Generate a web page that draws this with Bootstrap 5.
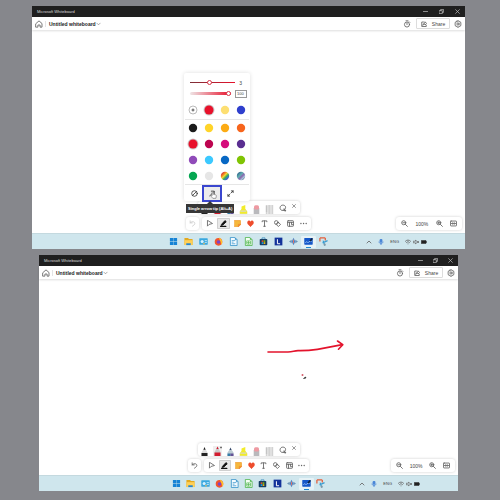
<!DOCTYPE html>
<html lang="en">
<head>
<meta charset="utf-8">
<meta name="viewport" content="width=device-width, initial-scale=1">
<title>Microsoft Whiteboard</title>
<link href="https://cdn.jsdelivr.net/npm/bootstrap@5.3.0/dist/css/bootstrap.min.css" rel="stylesheet">
<style>
body{background:#86878c;font-family:"Liberation Sans",Arial,sans-serif;font-size:5px;line-height:6px;color:#444}
.desk{min-height:100vh;padding:6px 35px 9px 32px;gap:6px}
.win{--tools:109px;--task:164px;--zoom:66px;--cap:16px;flex:243 1 0;background:#fff}
.win-b{--tools:105px;--task:159px;--zoom:64px;--cap:15px;flex:236 1 0;margin:0 7px}
svg{display:block;overflow:visible}
.ic{width:8px;height:8px;fill:none;stroke:#666;stroke-width:1.3;stroke-linecap:round;stroke-linejoin:round}
.win button,.win a{border:0;padding:0;background:none;color:inherit;display:flex;align-items:center;justify-content:center;text-decoration:none}
.titlebar{background:#1f1f1f;color:#ddd;height:11px;font-size:4px;padding-left:5px}
.titlebar button{width:var(--cap)}
.titlebar .ic{width:5px;height:5px;stroke:#bbb;stroke-width:1.7}
.head{height:13px;padding:0 3px;box-shadow:0 1px 2px #0002;z-index:1}
.head h1{font-size:5px;line-height:6px;font-weight:700;margin:0;color:#222}
.head .more .ic{width:5px}
.rule{width:1px;height:6px;background:#e4e4e4;margin:0 3px 0 2px}
.win .share{width:34px;height:11px;border:1px solid #ddd;border-radius:1px;gap:5px;margin:0 4px 0 5px}
.share .ic{width:6px;height:6px;stroke-width:1.7}
.board{padding:3px}
.panel-x{background:#fff;border-radius:3px;box-shadow:0 0 3px #0003}
.bottom-row{display:grid;grid-template-columns:1fr auto 1fr;align-items:end}
.dock{gap:3px}
.win .undo{width:13px;height:13px}
.tools{width:var(--tools);height:13px;padding:1px}
.tools button{flex:1 1 0;min-width:0}
.win .tools .on{background:#e8e8e8;box-shadow:inset 0 0 0 1px #d0d0d0;border-radius:1px;margin:0 1px}
.tools .ic{width:7px;height:7px;stroke-width:1.5}
.undo .ic{width:7px;height:7px;stroke-width:1.5}
.undo:disabled .ic{stroke:#ccc}
.zoomer{width:var(--zoom);height:13px;padding:0 5px;justify-self:end}
.zoomer .ic{width:7px;height:7px;stroke-width:1.5}
.pens{width:102px;height:13px;padding-right:1px;margin-bottom:3px}
.pens button{flex:13 1 0;align-items:end}
.win .pens .lasso{align-items:center}
.win .pens .shut{flex:9 1 0;align-items:start;padding-top:3px}
.pens .pen{width:9px;height:10px}
.pens .lasso .ic{stroke-width:1.4}
.pens .shut .ic{width:4px;height:4px;stroke-width:2}
.taskbar{height:16px;background:#cfe6ed;border-top:1px solid #c4d9df;display:grid;grid-template-columns:1fr auto 1fr;align-items:center;color:#444;font-size:4px}
.apps{width:var(--task)}
.apps a{flex:1 1 0;height:12px}
.apps .ap{width:9px;height:9px}
.apps .cur{background:#e6f2f6;border-radius:1px}
.apps .cur::after{content:"";position:absolute;bottom:0;width:5px;height:1px;background:#1f86d2}
.tray{justify-self:end;margin-right:38px;gap:2px}
.tray .ic{width:6px;height:6px;stroke-width:1.7}
/* colour menu */
.colors{position:absolute;left:-2px;bottom:29px;width:66px;padding:4px 1px 0;border-radius:2px;box-shadow:0 0 4px #0002;z-index:3}
.sl-row{height:11px;padding:0 2px 0 5px}
.sl-row input{appearance:none;height:6px;background:none;min-width:0;margin:0}
.sl-row .thick-in{width:45px}
.sl-row .alpha-in{width:41px}
.sl-row input::-webkit-slider-runnable-track{height:1px;background:linear-gradient(90deg,#7b3038,#e8112b)}
.sl-row .alpha-in::-webkit-slider-runnable-track{height:3px;border-radius:2px;background:linear-gradient(90deg,#eee5e6,#e8112b)}
.sl-row input::-webkit-slider-thumb{appearance:none;width:5px;height:5px;border:1px solid #d63346;background:#fff;border-radius:50%;margin-top:-2px}
.sl-row .alpha-in::-webkit-slider-thumb{margin-top:-1px}
.sl-row output{font-size:5px;line-height:6px;padding:0 5px 0 0}
.sl-row .boxed{border:1px solid #999;padding:0 1px;height:8px;width:12px;font-size:4px}
.sw-grid{display:grid;grid-template-columns:repeat(4,1fr);grid-auto-rows:16px;border-top:1px solid #e6e6e6}
.sw-grid.first-row{border:0;padding:4px 0 3px;grid-auto-rows:13px}
.sw-grid svg{width:12px;height:12px}
.tips{height:17px;border-top:1px solid #e6e6e6;padding-left:1px}
.tips button{width:16px;height:14px}
.tips .ic{width:7px;height:7px;stroke-width:1.4;stroke:#333}
.win .tips .picked{width:20px;height:17px;border:2px solid #3a46cf;background:#ececec}
.hand{position:absolute;left:26px;bottom:2px;width:7px;height:8px}
.tipbox{position:absolute;left:0;bottom:17px;z-index:4;background:#363636;color:#fff;font-size:4px;line-height:5px;font-weight:700;padding:2px;white-space:nowrap}
.tipbox::before{content:"";position:absolute;left:50%;top:-3px;margin-left:-3px;border:3px solid transparent;border-top:0;border-bottom-color:#363636}
.ink{position:absolute;left:54%;top:30%;width:84px;height:46px}
</style>
<script src="https://cdn.jsdelivr.net/npm/bootstrap@5.3.0/dist/js/bootstrap.bundle.min.js"></script>
</head>
<body>
<svg width="0" height="0" class="position-absolute" aria-hidden="true">
<defs>
<linearGradient id="rain" x1="0" y1="0" x2="1" y2="1"><stop offset=".15" stop-color="#d63636"/><stop offset=".33" stop-color="#f08a24"/><stop offset=".45" stop-color="#f4d838"/><stop offset=".6" stop-color="#42ad55"/><stop offset=".75" stop-color="#2c78c8"/><stop offset=".9" stop-color="#8b3ea8"/></linearGradient>
<linearGradient id="galaxy" x1="0" y1="0" x2="1" y2="1"><stop offset=".15" stop-color="#326a90"/><stop offset=".4" stop-color="#62b0b0"/><stop offset=".58" stop-color="#8a64b0"/><stop offset=".75" stop-color="#a9cbd8"/><stop offset=".9" stop-color="#4a3a80"/></linearGradient>
</defs>
<symbol id="home" viewBox="0 0 12 12"><path d="M1.5 5.3 6 1.3l4.500 4v5.400H7.600V7.500H4.400v3.200H1.500z"/></symbol>
<symbol id="chev" viewBox="0 0 12 12"><path d="M2 4l4 4 4-4"/></symbol>
<symbol id="up" viewBox="0 0 12 12"><path d="M2 8l4-4 4 4"/></symbol>
<symbol id="min" viewBox="0 0 12 12"><path d="M1 6h10"/></symbol>
<symbol id="rest" viewBox="0 0 12 12"><path d="M1 4h7v7H1zM4 4V1h7v7H8"/></symbol>
<symbol id="x" viewBox="0 0 12 12"><path d="M1.500 1.500l9 9m0-9l-9 9"/></symbol>
<symbol id="timer" viewBox="0 0 12 12"><circle cx="6" cy="6.800" r="3.800"/><path d="M4.500 1.200h3M6 4.600v2.200M9.400 2.700l.8.8"/></symbol>
<symbol id="shr" viewBox="0 0 12 12"><path d="M5 2H1.500v9h9V8.500M4 8c.3-3 2-4 4-4V1.500L11.300 5 8 8V6C6 6 5 6.700 4 8z"/></symbol>
<symbol id="gear" viewBox="0 0 12 12"><path d="M4.700 1.300h2.600l.5 1.400 1.500-.2 1.300 2.200-.9 1.300.9 1.300-1.300 2.200-1.500-.2-.5 1.400H4.700l-.5-1.400-1.500.2-1.300-2.200.9-1.300-.9-1.300 1.300-2.200 1.500.2z"/><circle cx="6" cy="6" r="1.700"/></symbol>
<symbol id="undo" viewBox="0 0 12 12"><path d="M2 1.500V5h3.500M2 5c2-3 8-3 8 1 0 2-2 3-4 4.500"/></symbol>
<symbol id="sel" viewBox="0 0 12 12"><path d="M2.500 1.200v9.300l2.700-2.900 5.300-1.400z"/></symbol>
<symbol id="inkpen" viewBox="0 0 12 12"><path d="M3 7l5.500-6 2.200 2L5 8.500l-2.500.7z" fill="#111" stroke="#111"/><path d="M1 11h9" stroke="#111" stroke-width="2"/></symbol>
<symbol id="note" viewBox="0 0 12 12"><path d="M1 1h10v6.500L7.500 11H1z" fill="#f6b83c" stroke="#f2a43a"/><path d="M11 7.500H7.500V11z" fill="#ef8b32" stroke="#ef8b32"/></symbol>
<symbol id="heart" viewBox="0 0 12 12"><path d="M6 11C2.500 8.500.8 6.500.8 4.200.8 1.300 4.500.4 6 2.800 7.500.4 11.200 1.300 11.200 4.200 11.200 6.500 9.500 8.500 6 11z" fill="#ee4d2d" stroke="#ee4d2d" stroke-width=".8"/></symbol>
<symbol id="txt" viewBox="0 0 12 12"><path d="M2 3V1.500h8V3M6 1.500v9.300M4.600 10.800h2.800"/></symbol>
<symbol id="shape" viewBox="0 0 12 12"><circle cx="4" cy="4.300" r="3.200"/><path d="M7.500 4l3.700 3.500-3.700 3.700L4 7.700z"/></symbol>
<symbol id="tmpl" viewBox="0 0 12 12"><rect x="1" y="1.200" width="10" height="9.600" rx="1"/><path d="M1 4h10M4.300 4v6.800M7.700 4v4H11"/></symbol>
<symbol id="dots" viewBox="0 0 12 12"><path d="M1.500 6h.2M6 6h.2M10.500 6h.2" stroke-width="2.200"/></symbol>
<symbol id="zout" viewBox="0 0 12 12"><circle cx="4.700" cy="4.700" r="3.500"/><path d="M7.500 7.500 11 11M3.200 4.700h3"/></symbol>
<symbol id="zin" viewBox="0 0 12 12"><circle cx="4.700" cy="4.700" r="3.500"/><path d="M7.500 7.500 11 11M3.200 4.700h3M4.700 3.200v3"/></symbol>
<symbol id="fit" viewBox="0 0 12 12"><rect x=".8" y="1.800" width="10.400" height="8.400" rx="1"/><path d="M4.300 4.600 2.900 6l1.400 1.400M7.700 4.600 9.100 6 7.700 7.400M3 6h6"/></symbol>
<symbol id="lasso" viewBox="0 0 12 12"><path d="M8 9.500H4.500C.5 9 .5 2 5.500 1.700c5-.2 5.500 4.500 3 6.500M8 7.500l2.500 3-2.500-.5z"/></symbol>
<symbol id="none" viewBox="0 0 12 12"><circle cx="6" cy="6" r="4.800"/><path d="M2.600 9.400l6.800-6.800"/></symbol>
<symbol id="one" viewBox="0 0 12 12"><path d="M1 10.500l7.500-8M4 2h5v5"/></symbol>
<symbol id="two" viewBox="0 0 12 12"><path d="M1.500 10.500l3.500-3.500M7 5l3.500-3.500M7.500 1.500h3v3M1.500 7.500v3h3"/></symbol>
<symbol id="mic" viewBox="0 0 12 12"><rect x="4" y="0" width="4" height="7" rx="2" fill="#4a86d8" stroke="#4a86d8"/><path d="M2 6c.5 4.500 7.500 4.500 8 0M6 9.500V12" stroke="#4a86d8"/></symbol>
<symbol id="wifi" viewBox="0 0 12 12"><path d="M.8 4.500c3-3.300 7.400-3.300 10.400 0M3 7c2-2 4-2 6 0M6 9.700h.1"/></symbol>
<symbol id="spk" viewBox="0 0 12 12"><path d="M1 4.500h2L6 2v8L3 7.500H1zM8.500 4.500l3 3m0-3l-3 3" stroke-width="1.500"/></symbol>
<symbol id="bat" viewBox="0 0 12 12"><path d="M1 3.500h9v5H1z" fill="#222" stroke="#222"/><path d="M11.800 5.300v1.400" stroke="#222"/></symbol>
<symbol id="p1" viewBox="0 0 9 10"><path d="M1.500 10V6.500L3.300 3.500 4.500 1 5.700 3.500l1.800 3V10z" fill="#ddd"/><path d="M3.400 3.800 4.500 1 5.600 3.800zM1.500 7h6v3h-6z" fill="#222"/></symbol>
<symbol id="p2" viewBox="0 0 9 10"><path d="M0 0h9v10H0z" fill="#f0eeee"/><path d="M1.500 10V6l1.800-3L4.500.5 5.700 3l1.800 3v4z" fill="#c9c9c9"/><path d="M3.400 3 4.500.5 5.700 3zM1.500 6.500h6V10h-6z" fill="#d31c30"/><path d="M7 1.500h2M8 .5v2" stroke="#555" stroke-width=".7"/></symbol>
<symbol id="p3" viewBox="0 0 9 10"><path d="M1.500 10V6.500L3.300 4 4.500 1.500 5.700 4l1.800 2.500V10z" fill="#bccbd3"/><path d="M3.500 4 4.500 1.600 5.500 4z" fill="#346"/><path d="M1.500 7.500h3V10h-3z" fill="#367da8"/><path d="M4.500 7.500h3V10h-3z" fill="#655295"/></symbol>
<symbol id="p4" viewBox="0 0 9 10"><path d="M.8 10V7.500L2.500 5h4l1.700 2.500V10z" fill="#ddd"/><path d="M2.500 5V2.500L6.300 1v4l1.900 2.500v2.200H.8V7.500z" fill="#f2ec2a"/><path d="M1.800 6.500h5.500v1.200H1z" fill="#d9d9c8"/></symbol>
<symbol id="p5" viewBox="0 0 9 10"><path d="M1.700 4h5.600v6H1.700z" fill="#b9b9bc"/><rect x="2" y="1.200" width="5" height="4.300" rx="1.500" fill="#ee9aa2"/></symbol>
<symbol id="p6" viewBox="0 0 9 10"><path d="M.8 1h7.400v9H.8z" fill="#d2d2d2"/><path d="M2.800 1v9M6 1v9" stroke="#eee"/><path d="M.8 3h1.500M.8 5h1.500M.8 7h1.500" stroke="#999" stroke-width=".5"/></symbol>
<symbol id="a1" viewBox="0 0 10 10"><path d="M1 1h3.800v3.800H1zM5.200 1H9v3.800H5.200zM1 5.200h3.800V9H1zM5.200 5.200H9V9H5.200z" fill="#1683d5"/></symbol>
<symbol id="a2" viewBox="0 0 10 10"><path d="M.5 1h4l1 1.200h4V9h-9z" fill="#e4a91e"/><path d="M.5 3.500h9V9h-9z" fill="#ffd057"/><path d="M2.500 7h5v2h-5z" fill="#2586d4"/></symbol>
<symbol id="a3" viewBox="0 0 10 10"><rect x=".3" y="1.500" width="9.400" height="7" rx=".5" fill="#39a8df"/><circle cx="3.500" cy="5" r="1.700" fill="#d8f2ff"/><path d="M6.300 4h2.500M6.300 6h2.500" stroke="#e9f8ff" stroke-width=".8"/><path d="M4.500 7h2v1h-2z" fill="#f7b94a"/></symbol>
<symbol id="a4" viewBox="0 0 10 10"><circle cx="5" cy="5.400" r="4.200" fill="#f2552c"/><path d="M5.500.5C9 2 10.500 6 8 8.500 8 5 6 4 5.500.5z" fill="#ffc22d"/><circle cx="5" cy="5.500" r="2" fill="#7b45c8"/></symbol>
<symbol id="a5" viewBox="0 0 10 10"><path d="M1.500.5h5l2.500 2.500v6.500H1.500z" fill="#f4fbff" stroke="#3591c8" stroke-width=".9"/><path d="M3 4h4M3 5.700h2M3 7.500h4" stroke="#3591c8" stroke-width=".8"/><path d="M6.500.5V3H9z" fill="#3591c8"/></symbol>
<symbol id="a6" viewBox="0 0 10 10"><path d="M1.500.5h5l2.500 2.500v6.500H1.500z" fill="#f4fff4" stroke="#4bb34a" stroke-width=".9"/><path d="M3 4.300h4.200V8H3zM3 6.200h4.200M5 4.300V8" fill="none" stroke="#4bb34a" stroke-width=".7"/><path d="M6.500.5V3H9z" fill="#4bb34a"/></symbol>
<symbol id="a7" viewBox="0 0 10 10"><path d="M3.300 2.500V1h3.400v1.500" fill="none" stroke="#2b82b8" stroke-width=".8"/><rect x=".8" y="2.200" width="8.400" height="7" rx=".8" fill="#173d62"/><path d="M3 3.700h1.800v1.800H3z" fill="#e9502b"/><path d="M5.200 3.700H7v1.800H5.200z" fill="#7fba00"/><path d="M3 5.900h1.800v1.800H3z" fill="#18a4ed"/><path d="M5.200 5.900H7v1.800H5.200z" fill="#ffba08"/></symbol>
<symbol id="a8" viewBox="0 0 10 10"><path d="M.7.700h8.600v8.600H.7z" fill="#12329a"/><path d="M3.800 2.500v5h3" fill="none" stroke="#fff" stroke-width="1.100"/></symbol>
<symbol id="a9" viewBox="0 0 10 10"><path d="M0 5l3-2v4zM10 5L7 3v4z" fill="#6b93b8"/><path d="M5 .8 7 5 5 9.200 3 5z" fill="#4a83c6"/><path d="M5 3v4" stroke="#eb7562"/></symbol>
<symbol id="a10" viewBox="0 0 10 10"><rect x=".3" y="1" width="9.400" height="7.500" rx=".7" fill="#1557c9"/><path d="M1.500 6.500c2-3 2 1 4-1s2 0 3-.5" fill="none" stroke="#bfe0ff" stroke-width=".8"/><path d="M6 4l2.500-3L10 2 7.500 5z" fill="#12243c"/></symbol>
<symbol id="a11" viewBox="0 0 10 10"><path d="M1 1h6M1 1v4M7 1v3" stroke="#e45f3b" stroke-width="1.400" fill="none"/><path d="M4.500 4l2 5.500M9.500 4 4 6.500" stroke="#3c9dd0" stroke-width="1.300"/><circle cx="6.300" cy="8.500" r="1.200" fill="#8197a3"/></symbol>
</svg>

<main class="desk d-flex flex-column">
<section class="win d-flex flex-column" aria-label="Whiteboard with colour menu">
  <div class="titlebar d-flex align-items-center"><span class="me-auto">Microsoft Whiteboard</span>
    <button aria-label="Minimize"><svg class="ic"><use href="#min"/></svg></button><button aria-label="Restore"><svg class="ic"><use href="#rest"/></svg></button><button aria-label="Close"><svg class="ic"><use href="#x"/></svg></button></div>
  <header class="head d-flex align-items-center position-relative">
    <button aria-label="Home"><svg class="ic"><use href="#home"/></svg></button><span class="rule"></span><h1>Untitled whiteboard</h1>
    <button class="more me-auto" aria-label="Board menu"><svg class="ic"><use href="#chev"/></svg></button>
    <button aria-label="Timer"><svg class="ic"><use href="#timer"/></svg></button>
    <button class="share"><svg class="ic"><use href="#shr"/></svg>Share</button>
    <button aria-label="Settings"><svg class="ic"><use href="#gear"/></svg></button>
  </header>
  <div class="board flex-grow-1 position-relative d-flex flex-column justify-content-end">
    <div class="pens panel-x d-flex align-self-center">
      <button aria-label="Black pen"><svg class="pen"><use href="#p1"/></svg></button><button aria-label="Red pen"><svg class="pen"><use href="#p2"/></svg></button><button aria-label="Galaxy pen"><svg class="pen"><use href="#p3"/></svg></button><button aria-label="Highlighter"><svg class="pen"><use href="#p4"/></svg></button><button aria-label="Eraser"><svg class="pen"><use href="#p5"/></svg></button><button aria-label="Ruler"><svg class="pen"><use href="#p6"/></svg></button><button class="lasso" aria-label="Lasso"><svg class="ic"><use href="#lasso"/></svg></button><button class="shut" aria-label="Close pens"><svg class="ic"><use href="#x"/></svg></button>
    </div>
    <div class="bottom-row"><span></span>
      <div class="dock d-flex position-relative">
        <button class="undo panel-x" disabled aria-label="Undo"><svg class="ic"><use href="#undo"/></svg></button>
        <div class="tools panel-x d-flex" role="toolbar"><button aria-label="Select"><svg class="ic"><use href="#sel"/></svg></button><button class="on" aria-label="Ink"><svg class="ic"><use href="#inkpen"/></svg></button><button aria-label="Note"><svg class="ic"><use href="#note"/></svg></button><button aria-label="Reactions"><svg class="ic"><use href="#heart"/></svg></button><button aria-label="Text"><svg class="ic"><use href="#txt"/></svg></button><button aria-label="Shapes"><svg class="ic"><use href="#shape"/></svg></button><button aria-label="Templates"><svg class="ic"><use href="#tmpl"/></svg></button><button aria-label="More"><svg class="ic"><use href="#dots"/></svg></button></div>
        <div class="colors panel-x">
          <div class="sl-row d-flex align-items-center justify-content-between"><input class="thick-in" type="range" min="0" max="7" value="3" aria-label="Thickness"><output>3</output></div>
          <div class="sl-row d-flex align-items-center justify-content-between"><input class="alpha-in" type="range" value="100" aria-label="Opacity"><output class="boxed">100</output></div>
          <div class="sw-grid first-row">
            <button aria-label="Add colour"><svg viewBox="0 0 12 12"><circle cx="6" cy="6" r="4" fill="#fff" stroke="#aaa" stroke-width=".8"/><path d="M4.500 6h3M6 4.500v3" stroke="#333" stroke-width=".8"/></svg></button>
            <button aria-label="Red, in use"><svg viewBox="0 0 12 12"><circle cx="6" cy="6" r="5.500" fill="#ccc"/><circle cx="6" cy="6" r="4.500" fill="#e8112b"/></svg></button>
            <button aria-label="Sand"><svg viewBox="0 0 12 12"><circle cx="6" cy="6" r="4.200" fill="#fddf72"/></svg></button>
            <button aria-label="Royal blue"><svg viewBox="0 0 12 12"><circle cx="6" cy="6" r="4.200" fill="#2f3fcd"/></svg></button>
          </div>
          <div class="sw-grid">
            <button aria-label="Black"><svg viewBox="0 0 12 12"><circle cx="6" cy="6" r="4.200" fill="#1b1b1b"/></svg></button>
            <button aria-label="Yellow"><svg viewBox="0 0 12 12"><circle cx="6" cy="6" r="4.200" fill="#ffd42a"/></svg></button>
            <button aria-label="Amber"><svg viewBox="0 0 12 12"><circle cx="6" cy="6" r="4.200" fill="#fcab14"/></svg></button>
            <button aria-label="Orange"><svg viewBox="0 0 12 12"><circle cx="6" cy="6" r="4.200" fill="#f7651d"/></svg></button>
            <button aria-label="Red"><svg viewBox="0 0 12 12"><circle cx="6" cy="6" r="5.500" fill="#ccc"/><circle cx="6" cy="6" r="4.500" fill="#e8112b"/></svg></button>
            <button aria-label="Crimson"><svg viewBox="0 0 12 12"><circle cx="6" cy="6" r="4.200" fill="#bd0550"/></svg></button>
            <button aria-label="Magenta"><svg viewBox="0 0 12 12"><circle cx="6" cy="6" r="4.200" fill="#d50c7c"/></svg></button>
            <button aria-label="Purple"><svg viewBox="0 0 12 12"><circle cx="6" cy="6" r="4.200" fill="#5a2e91"/></svg></button>
            <button aria-label="Lavender"><svg viewBox="0 0 12 12"><circle cx="6" cy="6" r="4.200" fill="#904bb9"/></svg></button>
            <button aria-label="Sky"><svg viewBox="0 0 12 12"><circle cx="6" cy="6" r="4.200" fill="#3cc9ff"/></svg></button>
            <button aria-label="Blue"><svg viewBox="0 0 12 12"><circle cx="6" cy="6" r="4.200" fill="#0868c4"/></svg></button>
            <button aria-label="Lime"><svg viewBox="0 0 12 12"><circle cx="6" cy="6" r="4.200" fill="#80c404"/></svg></button>
            <button aria-label="Green"><svg viewBox="0 0 12 12"><circle cx="6" cy="6" r="4.200" fill="#05a651"/></svg></button>
            <button aria-label="Grey"><svg viewBox="0 0 12 12"><circle cx="6" cy="6" r="4.200" fill="#e6e6e6"/></svg></button>
            <button aria-label="Rainbow"><svg viewBox="0 0 12 12"><circle cx="6" cy="6" r="4.200" fill="url(#rain)"/></svg></button>
            <button aria-label="Galaxy"><svg viewBox="0 0 12 12"><circle cx="6" cy="6" r="4.200" fill="url(#galaxy)"/></svg></button>
          </div>
          <div class="tips d-flex align-items-center"><button aria-label="No arrow"><svg class="ic"><use href="#none"/></svg></button><button class="picked" aria-label="Single arrow tip"><svg class="ic"><use href="#one"/></svg></button><button aria-label="Double arrow tip"><svg class="ic"><use href="#two"/></svg></button></div>
          <svg class="hand" viewBox="0 0 10 12"><path d="M3 7V1.500c0-1.300 1.700-1.300 1.700 0V5l3.600.8c1 .3 1 1 .9 2L8.500 11H4L1 7.500c0-1 1.200-1.200 2-.5z" fill="#fff" stroke="#666" stroke-width=".9"/></svg>
        </div>
        <div class="tipbox" role="tooltip">Single arrow tip (Alt+A)</div>
      </div>
      <div class="zoomer panel-x d-flex align-items-center justify-content-between"><button aria-label="Zoom out"><svg class="ic"><use href="#zout"/></svg></button><span>100%</span><button aria-label="Zoom in"><svg class="ic"><use href="#zin"/></svg></button><button aria-label="Fit to screen"><svg class="ic"><use href="#fit"/></svg></button></div>
    </div>
  </div>
  <footer class="taskbar"><span></span>
    <nav class="apps d-flex" aria-label="Apps"><a href="#" aria-label="Start"><svg class="ap"><use href="#a1"/></svg></a><a href="#" aria-label="Files"><svg class="ap"><use href="#a2"/></svg></a><a href="#" aria-label="Control panel"><svg class="ap"><use href="#a3"/></svg></a><a href="#" aria-label="Firefox"><svg class="ap"><use href="#a4"/></svg></a><a href="#" aria-label="Writer"><svg class="ap"><use href="#a5"/></svg></a><a href="#" aria-label="Calc"><svg class="ap"><use href="#a6"/></svg></a><a href="#" aria-label="Store"><svg class="ap"><use href="#a7"/></svg></a><a href="#" aria-label="L app"><svg class="ap"><use href="#a8"/></svg></a><a href="#" aria-label="Sync"><svg class="ap"><use href="#a9"/></svg></a><a href="#" class="cur position-relative" aria-label="Whiteboard"><svg class="ap"><use href="#a10"/></svg></a><a href="#" aria-label="Snipping tool"><svg class="ap"><use href="#a11"/></svg></a></nav>
    <div class="tray d-flex align-items-center"><svg class="ic"><use href="#up"/></svg><svg class="ic mx-1"><use href="#mic"/></svg><span class="me-1">ENG</span><svg class="ic"><use href="#wifi"/></svg><svg class="ic"><use href="#spk"/></svg><svg class="ic"><use href="#bat"/></svg></div>
  </footer>
</section>

<section class="win win-b d-flex flex-column" aria-label="Whiteboard with arrow">
  <div class="titlebar d-flex align-items-center"><span class="me-auto">Microsoft Whiteboard</span>
    <button aria-label="Minimize"><svg class="ic"><use href="#min"/></svg></button><button aria-label="Restore"><svg class="ic"><use href="#rest"/></svg></button><button aria-label="Close"><svg class="ic"><use href="#x"/></svg></button></div>
  <header class="head d-flex align-items-center position-relative">
    <button aria-label="Home"><svg class="ic"><use href="#home"/></svg></button><span class="rule"></span><h1>Untitled whiteboard</h1>
    <button class="more me-auto" aria-label="Board menu"><svg class="ic"><use href="#chev"/></svg></button>
    <button aria-label="Timer"><svg class="ic"><use href="#timer"/></svg></button>
    <button class="share"><svg class="ic"><use href="#shr"/></svg>Share</button>
    <button aria-label="Settings"><svg class="ic"><use href="#gear"/></svg></button>
  </header>
  <div class="board flex-grow-1 position-relative d-flex flex-column justify-content-end">
    <svg class="ink" viewBox="0 0 84 46" role="img" aria-label="Red arrow"><g fill="none" stroke="#e3132c" stroke-width="1.600" stroke-linecap="round" stroke-linejoin="round"><path d="M3 14h20c5 0 6-1.400 10-1.400 14 .3 24-1.800 44-5.900"/><path d="M72.500 3l5.300 3.700-4.300 4.500"/></g><circle cx="37.500" cy="37" r="1" fill="#d45b68"/><path d="M38.500 40.500l2-1.500.5 1z" fill="#222" stroke="#222" stroke-width=".6"/></svg>
    <div class="pens panel-x d-flex align-self-center">
      <button aria-label="Black pen"><svg class="pen"><use href="#p1"/></svg></button><button aria-label="Red pen"><svg class="pen"><use href="#p2"/></svg></button><button aria-label="Galaxy pen"><svg class="pen"><use href="#p3"/></svg></button><button aria-label="Highlighter"><svg class="pen"><use href="#p4"/></svg></button><button aria-label="Eraser"><svg class="pen"><use href="#p5"/></svg></button><button aria-label="Ruler"><svg class="pen"><use href="#p6"/></svg></button><button class="lasso" aria-label="Lasso"><svg class="ic"><use href="#lasso"/></svg></button><button class="shut" aria-label="Close pens"><svg class="ic"><use href="#x"/></svg></button>
    </div>
    <div class="bottom-row"><span></span>
      <div class="dock d-flex position-relative">
        <button class="undo panel-x" aria-label="Undo"><svg class="ic"><use href="#undo"/></svg></button>
        <div class="tools panel-x d-flex" role="toolbar"><button aria-label="Select"><svg class="ic"><use href="#sel"/></svg></button><button class="on" aria-label="Ink"><svg class="ic"><use href="#inkpen"/></svg></button><button aria-label="Note"><svg class="ic"><use href="#note"/></svg></button><button aria-label="Reactions"><svg class="ic"><use href="#heart"/></svg></button><button aria-label="Text"><svg class="ic"><use href="#txt"/></svg></button><button aria-label="Shapes"><svg class="ic"><use href="#shape"/></svg></button><button aria-label="Templates"><svg class="ic"><use href="#tmpl"/></svg></button><button aria-label="More"><svg class="ic"><use href="#dots"/></svg></button></div>
      </div>
      <div class="zoomer panel-x d-flex align-items-center justify-content-between"><button aria-label="Zoom out"><svg class="ic"><use href="#zout"/></svg></button><span>100%</span><button aria-label="Zoom in"><svg class="ic"><use href="#zin"/></svg></button><button aria-label="Fit to screen"><svg class="ic"><use href="#fit"/></svg></button></div>
    </div>
  </div>
  <footer class="taskbar"><span></span>
    <nav class="apps d-flex" aria-label="Apps"><a href="#" aria-label="Start"><svg class="ap"><use href="#a1"/></svg></a><a href="#" aria-label="Files"><svg class="ap"><use href="#a2"/></svg></a><a href="#" aria-label="Control panel"><svg class="ap"><use href="#a3"/></svg></a><a href="#" aria-label="Firefox"><svg class="ap"><use href="#a4"/></svg></a><a href="#" aria-label="Writer"><svg class="ap"><use href="#a5"/></svg></a><a href="#" aria-label="Calc"><svg class="ap"><use href="#a6"/></svg></a><a href="#" aria-label="Store"><svg class="ap"><use href="#a7"/></svg></a><a href="#" aria-label="L app"><svg class="ap"><use href="#a8"/></svg></a><a href="#" aria-label="Sync"><svg class="ap"><use href="#a9"/></svg></a><a href="#" class="cur position-relative" aria-label="Whiteboard"><svg class="ap"><use href="#a10"/></svg></a><a href="#" aria-label="Snipping tool"><svg class="ap"><use href="#a11"/></svg></a></nav>
    <div class="tray d-flex align-items-center"><svg class="ic"><use href="#up"/></svg><svg class="ic mx-1"><use href="#mic"/></svg><span class="me-1">ENG</span><svg class="ic"><use href="#wifi"/></svg><svg class="ic"><use href="#spk"/></svg><svg class="ic"><use href="#bat"/></svg></div>
  </footer>
</section>
</main>
</body>
</html>
